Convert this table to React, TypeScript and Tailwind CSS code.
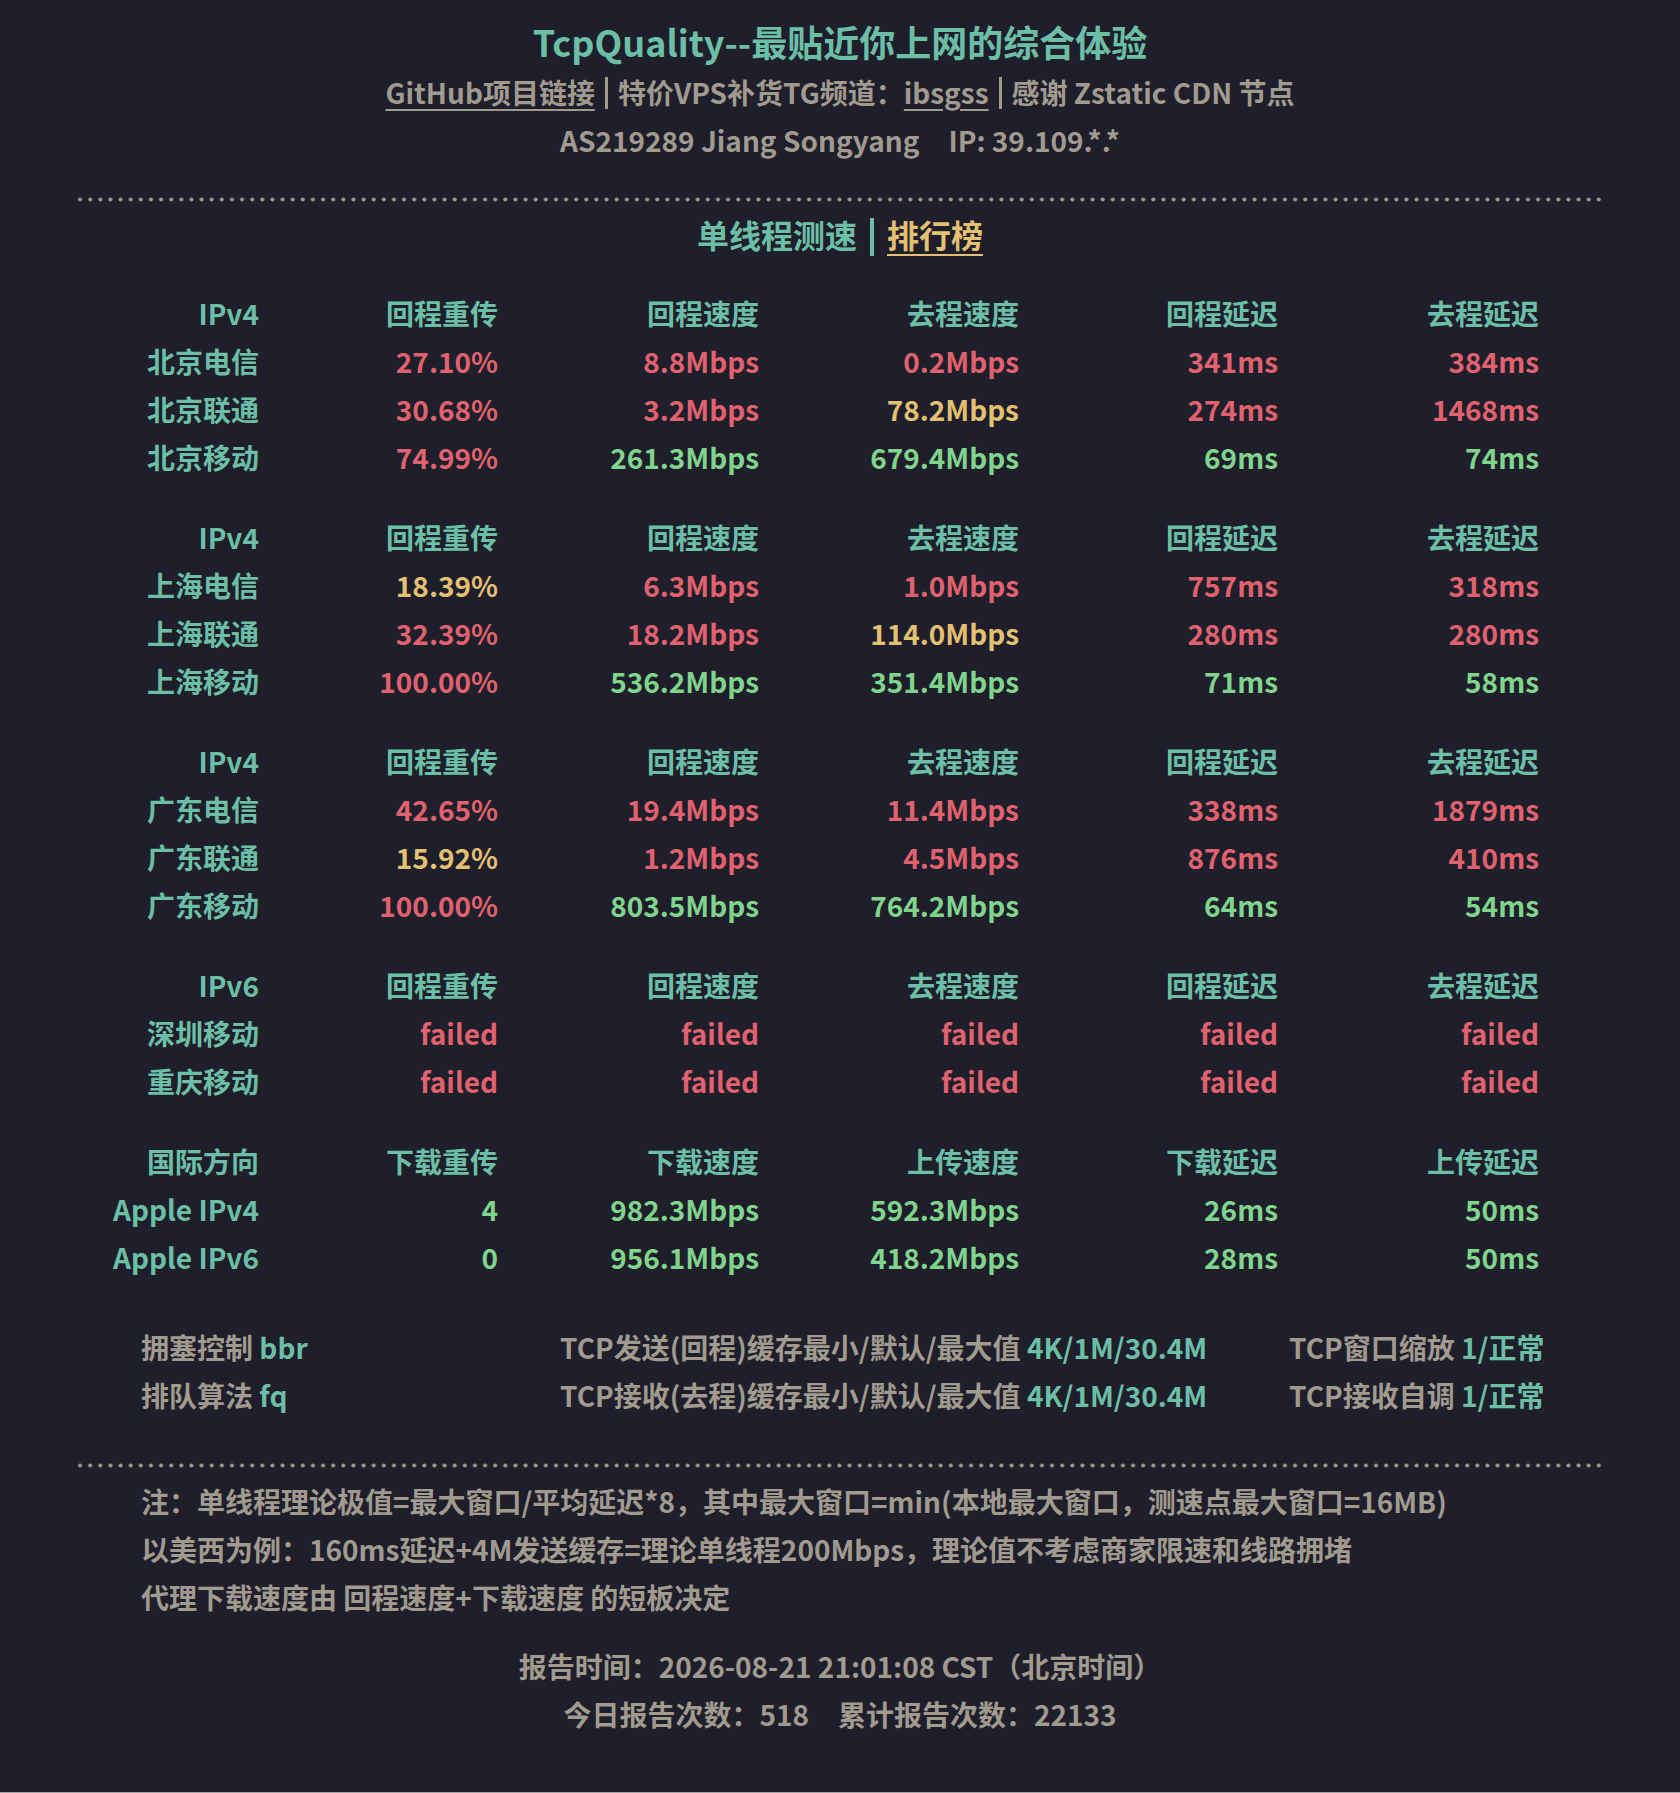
import React from 'react';

const colors = {
  r: 'text-[#e0626f]',
  y: 'text-[#e3c072]',
  g: 'text-[#80d48b]',
};

type Tone = keyof typeof colors;
type Row = { name: string; cells: [string, Tone][] };
type Group = { head: string[]; rows: Row[] };

const ipv4Head = ['IPv4', '回程重传', '回程速度', '去程速度', '回程延迟', '去程延迟'];

const groups: Group[] = [
  {
    head: ipv4Head,
    rows: [
      { name: '北京电信', cells: [['27.10%', 'r'], ['8.8Mbps', 'r'], ['0.2Mbps', 'r'], ['341ms', 'r'], ['384ms', 'r']] },
      { name: '北京联通', cells: [['30.68%', 'r'], ['3.2Mbps', 'r'], ['78.2Mbps', 'y'], ['274ms', 'r'], ['1468ms', 'r']] },
      { name: '北京移动', cells: [['74.99%', 'r'], ['261.3Mbps', 'g'], ['679.4Mbps', 'g'], ['69ms', 'g'], ['74ms', 'g']] },
    ],
  },
  {
    head: ipv4Head,
    rows: [
      { name: '上海电信', cells: [['18.39%', 'y'], ['6.3Mbps', 'r'], ['1.0Mbps', 'r'], ['757ms', 'r'], ['318ms', 'r']] },
      { name: '上海联通', cells: [['32.39%', 'r'], ['18.2Mbps', 'r'], ['114.0Mbps', 'y'], ['280ms', 'r'], ['280ms', 'r']] },
      { name: '上海移动', cells: [['100.00%', 'r'], ['536.2Mbps', 'g'], ['351.4Mbps', 'g'], ['71ms', 'g'], ['58ms', 'g']] },
    ],
  },
  {
    head: ipv4Head,
    rows: [
      { name: '广东电信', cells: [['42.65%', 'r'], ['19.4Mbps', 'r'], ['11.4Mbps', 'r'], ['338ms', 'r'], ['1879ms', 'r']] },
      { name: '广东联通', cells: [['15.92%', 'y'], ['1.2Mbps', 'r'], ['4.5Mbps', 'r'], ['876ms', 'r'], ['410ms', 'r']] },
      { name: '广东移动', cells: [['100.00%', 'r'], ['803.5Mbps', 'g'], ['764.2Mbps', 'g'], ['64ms', 'g'], ['54ms', 'g']] },
    ],
  },
  {
    head: ['IPv6', '回程重传', '回程速度', '去程速度', '回程延迟', '去程延迟'],
    rows: [
      { name: '深圳移动', cells: [['failed', 'r'], ['failed', 'r'], ['failed', 'r'], ['failed', 'r'], ['failed', 'r']] },
      { name: '重庆移动', cells: [['failed', 'r'], ['failed', 'r'], ['failed', 'r'], ['failed', 'r'], ['failed', 'r']] },
    ],
  },
  {
    head: ['国际方向', '下载重传', '下载速度', '上传速度', '下载延迟', '上传延迟'],
    rows: [
      { name: 'Apple IPv4', cells: [['4', 'g'], ['982.3Mbps', 'g'], ['592.3Mbps', 'g'], ['26ms', 'g'], ['50ms', 'g']] },
      { name: 'Apple IPv6', cells: [['0', 'g'], ['956.1Mbps', 'g'], ['418.2Mbps', 'g'], ['28ms', 'g'], ['50ms', 'g']] },
    ],
  },
];

function Dots() {
  return (
    <div className="-ml-[3px] h-[5px] w-[1530px] bg-[radial-gradient(circle,#9e988c_1.7px,transparent_2.3px)] bg-[length:10.133px_5px] bg-repeat-x" />
  );
}

function Bar({ className }: { className: string }) {
  return <span className={'inline-block align-[-5px] ' + className} />;
}

export default function App() {
  return (
    <div
      className="min-h-[1793px] border-b border-[#a3a3a3] bg-[#1f1e2b] px-[78px] text-[28px] font-semibold leading-[48px] text-[#a09a8f]"
      style={{ fontFamily: '"Noto Sans CJK SC", "Noto Sans", sans-serif' }}
    >
      {/* 头部 */}
      <div className="pt-[15px] text-center">
        <h1 className="text-[36px] leading-[52px] text-[#6cbfa6]">TcpQuality--最贴近你上网的综合体验</h1>
        <p className="mt-px">
          <span className="underline decoration-2 underline-offset-[5px]">GitHub项目链接</span>
          <Bar className="mx-[10px] h-[32px] w-[3px] bg-[#a09a8f]" />
          特价VPS补货TG频道：<span className="underline decoration-2 underline-offset-[5px]">ibsgss</span>
          <Bar className="mx-[10px] h-[32px] w-[3px] bg-[#a09a8f]" />
          感谢 Zstatic CDN 节点
        </p>
        <p>
          AS219289 Jiang Songyang<span className="ml-[29px]">IP: 39.109.*.*</span>
        </p>
      </div>

      <div className="mt-[33px]">
        <Dots />
      </div>

      <div className="mt-[8px] text-center text-[32px] text-[#6cbfa6]">
        单线程测速
        <span className="mx-[13px] inline-block h-[38px] w-[4px] bg-[#6cbfa6] align-[-8px]" />
        <span className="text-[#e3c072] underline decoration-2 underline-offset-[6px]">排行榜</span>
      </div>

      {/* 测速表 */}
      <div className="mt-[31px] flex flex-col gap-[32px]">
        {groups.map((group, gi) => (
          <div key={gi} className="grid grid-cols-[181px_239px_261px_260px_259px_261px] whitespace-nowrap text-right">
            {group.head.map((h) => (
              <div key={h} className="text-[#6cbfa6]">{h}</div>
            ))}
            {group.rows.map((row) => (
              <React.Fragment key={row.name}>
                <div className="text-[#6cbfa6]">{row.name}</div>
                {row.cells.map(([v, tone], ci) => (
                  <div key={ci} className={colors[tone]}>{v}</div>
                ))}
              </React.Fragment>
            ))}
          </div>
        ))}
      </div>

      {/* 系统参数 */}
      <div className="mt-[42px] grid grid-cols-[419px_729px_auto] whitespace-nowrap pl-[63px]">
        <div>拥塞控制 <span className="text-[#6cbfa6]">bbr</span></div>
        <div>TCP发送(回程)缓存最小/默认/最大值 <span className="text-[#6cbfa6]">4K/1M/30.4M</span></div>
        <div>TCP窗口缩放 <span className="text-[#6cbfa6]">1/正常</span></div>
        <div>排队算法 <span className="text-[#6cbfa6]">fq</span></div>
        <div>TCP接收(去程)缓存最小/默认/最大值 <span className="text-[#6cbfa6]">4K/1M/30.4M</span></div>
        <div>TCP接收自调 <span className="text-[#6cbfa6]">1/正常</span></div>
      </div>

      <div className="mt-[44px]">
        <Dots />
      </div>

      <div className="mt-[9px] pl-[63px]">
        <p>注：单线程理论极值=最大窗口/平均延迟*8，其中最大窗口=min(本地最大窗口，测速点最大窗口=16MB)</p>
        <p>以美西为例：160ms延迟+4M发送缓存=理论单线程200Mbps，理论值不考虑商家限速和线路拥堵</p>
        <p>代理下载速度由 回程速度+下载速度 的短板决定</p>
      </div>

      <div className="mt-[21px] text-center">
        <p>报告时间：2026-08-21 21:01:08 CST（北京时间）</p>
        <p>
          今日报告次数：518<span className="ml-[29px]">累计报告次数：22133</span>
        </p>
      </div>
    </div>
  );
}
